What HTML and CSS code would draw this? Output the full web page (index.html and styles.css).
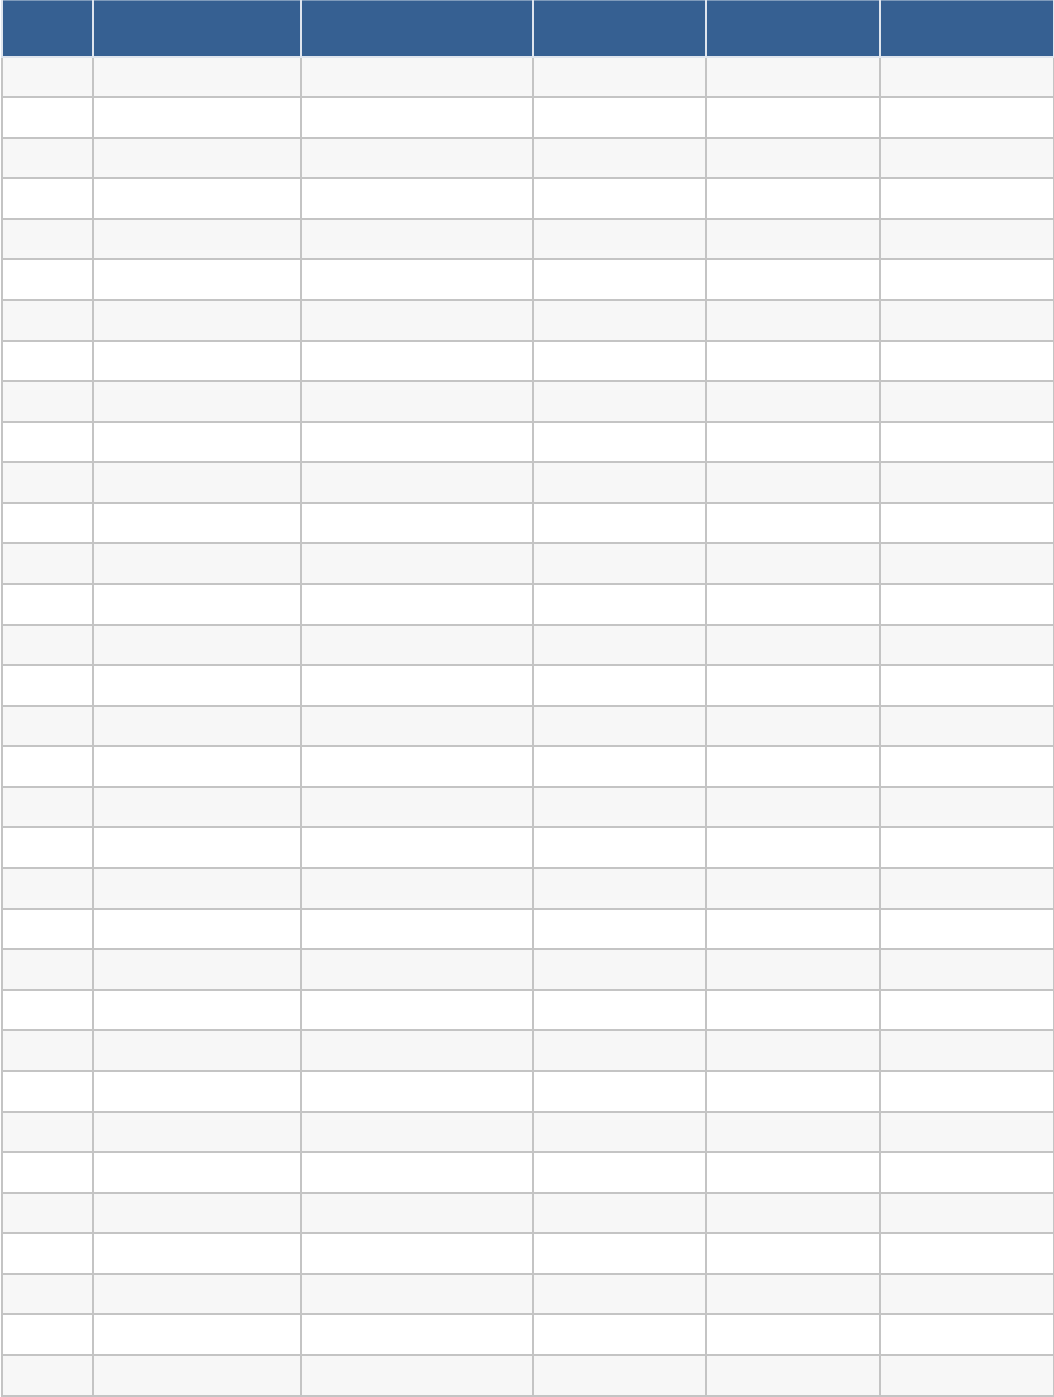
FILE: index.html
```html
<!DOCTYPE html>
<html>
<head>
<meta charset="utf-8">
<link rel="stylesheet" href="styles.css">
</head>
<body>
<table class="sheet">
<colgroup>
<col class="c1"><col class="c2"><col class="c3"><col class="c4"><col class="c5"><col class="c6">
</colgroup>
<thead>
<tr><th></th><th></th><th></th><th></th><th></th><th></th></tr>
</thead>
<tbody>
<tr><td></td><td></td><td></td><td></td><td></td><td></td></tr>
<tr><td></td><td></td><td></td><td></td><td></td><td></td></tr>
<tr><td></td><td></td><td></td><td></td><td></td><td></td></tr>
<tr><td></td><td></td><td></td><td></td><td></td><td></td></tr>
<tr><td></td><td></td><td></td><td></td><td></td><td></td></tr>
<tr><td></td><td></td><td></td><td></td><td></td><td></td></tr>
<tr><td></td><td></td><td></td><td></td><td></td><td></td></tr>
<tr><td></td><td></td><td></td><td></td><td></td><td></td></tr>
<tr><td></td><td></td><td></td><td></td><td></td><td></td></tr>
<tr><td></td><td></td><td></td><td></td><td></td><td></td></tr>
<tr><td></td><td></td><td></td><td></td><td></td><td></td></tr>
<tr><td></td><td></td><td></td><td></td><td></td><td></td></tr>
<tr><td></td><td></td><td></td><td></td><td></td><td></td></tr>
<tr><td></td><td></td><td></td><td></td><td></td><td></td></tr>
<tr><td></td><td></td><td></td><td></td><td></td><td></td></tr>
<tr><td></td><td></td><td></td><td></td><td></td><td></td></tr>
<tr><td></td><td></td><td></td><td></td><td></td><td></td></tr>
<tr><td></td><td></td><td></td><td></td><td></td><td></td></tr>
<tr><td></td><td></td><td></td><td></td><td></td><td></td></tr>
<tr><td></td><td></td><td></td><td></td><td></td><td></td></tr>
<tr><td></td><td></td><td></td><td></td><td></td><td></td></tr>
<tr><td></td><td></td><td></td><td></td><td></td><td></td></tr>
<tr><td></td><td></td><td></td><td></td><td></td><td></td></tr>
<tr><td></td><td></td><td></td><td></td><td></td><td></td></tr>
<tr><td></td><td></td><td></td><td></td><td></td><td></td></tr>
<tr><td></td><td></td><td></td><td></td><td></td><td></td></tr>
<tr><td></td><td></td><td></td><td></td><td></td><td></td></tr>
<tr><td></td><td></td><td></td><td></td><td></td><td></td></tr>
<tr><td></td><td></td><td></td><td></td><td></td><td></td></tr>
<tr><td></td><td></td><td></td><td></td><td></td><td></td></tr>
<tr><td></td><td></td><td></td><td></td><td></td><td></td></tr>
<tr><td></td><td></td><td></td><td></td><td></td><td></td></tr>
<tr><td></td><td></td><td></td><td></td><td></td><td></td></tr>
</tbody>
</table>
</body>
</html>
```
FILE: styles.css
```css
html, body { margin: 0; padding: 0; background: #ffffff; }
body { font-family: "Liberation Sans", Arial, sans-serif; font-size: 14px; }
.sheet { width: 1052px; margin: 0 1px; border-collapse: collapse; table-layout: fixed; }
.c1 { width: 91px; }
.c2 { width: 208px; }
.c3 { width: 232px; }
.c4 { width: 173px; }
.c5 { width: 174px; }
.c6 { width: 174px; }
.sheet th { background: #366092; height: 56px; padding: 0; border: 2px solid #dfe5ee; border-top: 1px solid #7f9bbb; box-sizing: border-box; }
.sheet td { height: 40.58px; padding: 0; border: 2px solid #c4c4c4; box-sizing: border-box; }
.sheet tbody tr:nth-child(odd) td { background: #f7f7f7; }
.sheet tbody tr:nth-child(even) td { background: #ffffff; }
```
